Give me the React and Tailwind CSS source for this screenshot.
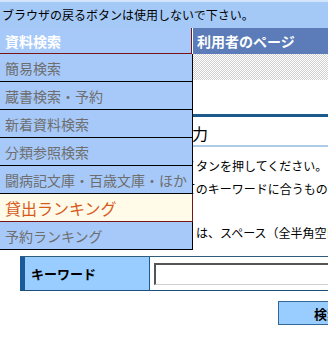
export default function App() {
  const items = [
    "簡易検索",
    "蔵書検索・予約",
    "新着資料検索",
    "分類参照検索",
    "闘病記文庫・百歳文庫・ほか",
  ];
  return (
    <div className="relative w-[328px] h-[350px] overflow-hidden bg-white font-['Noto_Sans_CJK_JP',sans-serif] text-black">
      <div className="h-[28px] bg-[#a4c9f7] border-t-2 border-[#d2e5fb] flex items-center pl-[2px] text-[12px] leading-none whitespace-nowrap">
        ブラウザの戻るボタンは使用しないで下さい。
      </div>
      <div className="flex h-[26px]">
        <div className="w-[192px] shrink-0 bg-[#a7c9f9] border-r border-b border-[#7a1414] flex items-center pl-[5px] text-white font-bold text-[14px] leading-none">
          資料検索
        </div>
        <div className="w-px shrink-0 bg-white" />
        <div className="flex-1 bg-[#5b7cb8] flex items-center pl-[4px] text-white font-bold text-[14px] leading-none whitespace-nowrap">
          利用者のページ
        </div>
      </div>
      <div className="h-[26px] bg-[repeating-conic-gradient(#d0d0d0_0_25%,#ffffff_0_50%)] bg-[length:2px_2px]" />
      <div className="mt-[34px] pl-[20px] w-[420px]">
        <div className="border-t-[3px] border-[#1d5a8c] border-b-2 border-b-[#aecbe6] h-[33px] flex items-center pl-[12px] text-[16px] leading-none whitespace-nowrap pt-[4px]">
          資料検索キーワード入力
        </div>
        <div className="pt-[8px] text-[12px] leading-[22px] whitespace-nowrap">
          <div className="pl-[90px]">
            <span>入力後、検索ボ</span>
            <span className="ml-[2px]">タンを押してください。</span>
          </div>
          <div className="mt-px pl-[93px]">入力したすべてのキーワードに合うもの</div>
          <div className="pl-[8px]">を検索します。</div>
          <div className="pl-[113px]">
            <span>複数の語句</span>
            <span className="ml-[3px]">は、スペース（全半角空白）で区切ってください。</span>
          </div>
        </div>
        <div className="mt-[12px] border-t border-[#2d5f7d] border-b border-b-[#1d4f7d] flex h-[35px]">
          <div className="w-[130px] shrink-0 bg-[#99ccff] border-l-[5px] border-[#1a5a98] border-r border-r-[#1a5a98] flex items-center pl-[6px] text-[13px] font-bold leading-none">
            キーワード
          </div>
          <div className="flex-1 pl-[4px] pt-[6px]">
            <div className="h-[22px] w-[300px] border-t-2 border-l-2 border-[#555555] border-b border-r border-b-[#d0d0d0] border-r-[#d0d0d0] bg-white" />
          </div>
        </div>
        <div className="mt-[10px] ml-[258px] w-[98px] h-[24px] bg-[#99ccff] border border-[#336699] flex items-center justify-center text-[13px] font-bold leading-none">
          検索
        </div>
      </div>

      <div className="absolute left-0 top-[54px] w-[193px]">
        {items.map((t) => (
          <div
            key={t}
            className="h-[28px] bg-[#a7c9f9] border-b border-r border-black flex items-center pl-[5px] text-[14px] leading-none text-[#6e6e6e] whitespace-nowrap"
          >
            {t}
          </div>
        ))}
        <div className="h-[28px] bg-[#fffbe8] border-b border-r border-[#7a1414] flex items-center pl-[5px] text-[16px] leading-none text-[#d65a1c] whitespace-nowrap">
          貸出ランキング
        </div>
        <div className="h-[28px] bg-[#a7c9f9] border-b border-r border-black flex items-center pl-[5px] text-[14px] leading-none text-[#6e6e6e] whitespace-nowrap">
          予約ランキング
        </div>
      </div>
    </div>
  );
}
